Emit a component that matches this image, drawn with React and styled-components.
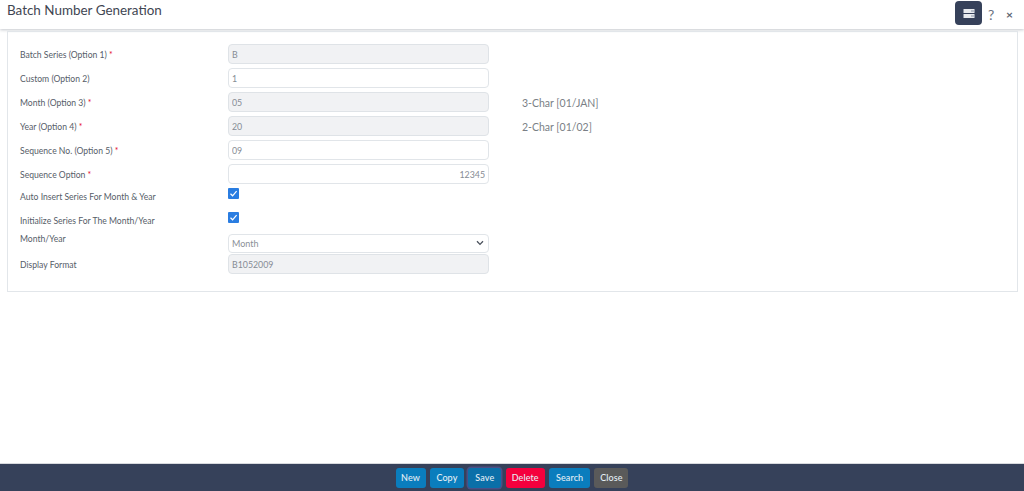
import React from 'react';
import styled, { createGlobalStyle } from 'styled-components';

const Global = createGlobalStyle`
  html, body { margin: 0; height: 100%; background: #fff; }
  body { font-family: Lato, "Open Sans", sans-serif; }
  #root { height: 100%; }
`;

const Page = styled.div`
  width: 1024px;
  height: 491px;
  display: flex;
  flex-direction: column;
  overflow: hidden;
`;

const Header = styled.header`
  height: 29px;
  flex: none;
  display: flex;
  align-items: flex-start;
  justify-content: space-between;
  padding: 2px 11px 0 7px;
  box-sizing: border-box;
  box-shadow: 0 1px 3px rgba(60, 70, 90, 0.3);
`;

const Title = styled.h1`
  margin: -1px 0 0;
  font-size: 13.45px;
  line-height: 18px;
  font-weight: 400;
  color: #3f4652;
`;

const HeaderTools = styled.div`
  display: flex;
  align-items: center;
  height: 24px;
`;

const MenuButton = styled.button`
  width: 27px;
  height: 24px;
  margin-top: -2px;
  padding: 0;
  border: 0;
  border-radius: 4px;
  background: #36415a;
  display: flex;
  align-items: center;
  justify-content: center;
`;

const Help = styled.span`
  margin-left: 6px;
  width: 9px;
  font-size: 14px;
  color: #6a7280;
`;

const Cross = styled.span`
  margin-left: 9px;
  font-size: 12px;
  font-weight: 700;
  color: #5c6470;
`;

const Panel = styled.main`
  margin: 2px 6px 0 7px;
  height: 261px;
  flex: none;
  box-sizing: border-box;
  border: 1px solid #e2e6ea;
  padding: 10px 12px 0;
  display: flex;
  flex-direction: column;
`;

const Row = styled.div`
  display: grid;
  grid-template-columns: 208px 261px 1fr;
  height: ${p => p.$h || 24}px;
  align-items: center;
`;

const Label = styled.label`
  font-size: 8.6px;
  color: #565d68;
  align-self: ${p => p.$top ? 'start' : 'center'};
  padding-top: ${p => p.$pad ?? 2}px;
`;

const Star = styled.span`
  color: #e5102f;
`;

const Field = styled.input`
  width: 261px;
  height: 20px;
  box-sizing: border-box;
  border: 1px solid ${p => p.readOnly ? '#dfe3e7' : '#e1e5e9'};
  border-radius: 4px;
  background: ${p => p.readOnly ? '#f1f2f4' : '#fff'};
  color: #868c94;
  font: 8.8px Lato, sans-serif;
  padding: 0 3px;
  text-align: ${p => p.$right ? 'right' : 'left'};
  outline: none;
`;

const Hint = styled.span`
  margin: 2px 0 0 33px;
  font-size: 10.5px;
  color: #7a7f86;
`;

const Check = styled.span`
  width: 11px;
  height: 11px;
  border-radius: 1px;
  background: #2a7de1;
  display: flex;
  align-items: center;
  justify-content: center;
  margin-top: ${p => p.$mt || 0}px;
`;

const SelectBox = styled.div`
  width: 261px;
  height: 19px;
  box-sizing: border-box;
  border: 1px solid #e1e5e9;
  border-radius: 4px;
  background: #fff;
  color: #8a9097;
  font-size: 9px;
  padding: 0 4px 0 3px;
  display: flex;
  align-items: center;
  justify-content: space-between;
`;

const Spacer = styled.div`
  flex: 1;
`;

const Footer = styled.footer`
  height: 28px;
  flex: none;
  background: #36415a;
  border-top: 1px solid #d8dade;
  box-sizing: border-box;
  display: flex;
  align-items: center;
  justify-content: center;
  gap: 4.4px;
`;

const colours = { blue: '#0a7dbd', red: '#f5003d', grey: '#5a5a5a' };

const Action = styled.button`
  height: 20px;
  width: ${p => p.$w}px;
  padding: 0;
  border: 0;
  border-radius: 3px;
  background: ${p => colours[p.$tone || 'blue']};
  color: #e4eef5;
  font: 500 9px Lato, sans-serif;
  letter-spacing: 0.1px;
  ${p => p.$focus && 'box-shadow: 0 0 0 1.5px #4a4f86; background: #0b6fa8;'}
`;

const rows = [
  { label: 'Batch Series (Option 1)', req: true, value: 'B', ro: true },
  { label: 'Custom (Option 2)', value: '1' },
  { label: 'Month (Option 3)', req: true, value: '05', ro: true, hint: '3-Char [01/JAN]' },
  { label: 'Year (Option 4)', req: true, value: '20', ro: true, hint: '2-Char [01/02]' },
  { label: 'Sequence No. (Option 5)', req: true, value: '09' },
  { label: 'Sequence Option', req: true, value: '12345', right: true },
];

const CheckMark = ({ mt }) => (
  <Check $mt={mt}>
    <svg width="9" height="9" viewBox="0 0 9 9" fill="none">
      <path d="M1.5 4.8 3.6 6.8 7.6 2.2" stroke="#fff" strokeWidth="1.2" />
    </svg>
  </Check>
);

export default function App() {
  return (
    <Page>
      <Global />
      <Header>
        <Title>Batch Number Generation</Title>
        <HeaderTools>
          <MenuButton aria-label="Menu">
            <svg width="12" height="9" viewBox="0 0 12 9">
              <rect x="0.5" y="0" width="11" height="4" fill="#e8ebef" />
              <rect x="0.5" y="5" width="11" height="4" fill="#e8ebef" />
              <rect x="8" y="1.5" width="3" height="1" fill="#8a93a5" />
              <rect x="8" y="6.5" width="3" height="1" fill="#8a93a5" />
            </svg>
          </MenuButton>
          <Help>?</Help>
          <Cross>×</Cross>
        </HeaderTools>
      </Header>
      <Panel>
        {rows.map(r => (
          <Row key={r.label}>
            <Label>{r.label}{r.req && <Star> *</Star>}</Label>
            <Field readOnly={r.ro} defaultValue={r.value} $right={r.right} />
            {r.hint && <Hint>{r.hint}</Hint>}
          </Row>
        ))}
        <Row $h={22}>
          <Label $pad={0}>Auto Insert Series For Month &amp; Year</Label>
          <CheckMark mt={-8} />
        </Row>
        <Row>
          <Label>Initialize Series For The Month/Year</Label>
          <CheckMark mt={-6} />
        </Row>
        <Row $h={22}>
          <Label $top>Month/Year</Label>
          <SelectBox>
            Month
            <svg width="8" height="6" viewBox="0 0 8 6" fill="none">
              <path d="M1 1.2 4 4.4 7 1.2" stroke="#4a515c" strokeWidth="1.3" />
            </svg>
          </SelectBox>
        </Row>
        <Row $h={20}>
          <Label>Display Format</Label>
          <Field readOnly defaultValue="B1052009" />
        </Row>
      </Panel>
      <Spacer />
      <Footer>
        <Action $w={30}>New</Action>
        <Action $w={34}>Copy</Action>
        <Action $w={33} $focus>Save</Action>
        <Action $w={39} $tone="red">Delete</Action>
        <Action $w={41}>Search</Action>
        <Action $w={34} $tone="grey">Close</Action>
      </Footer>
    </Page>
  );
}
